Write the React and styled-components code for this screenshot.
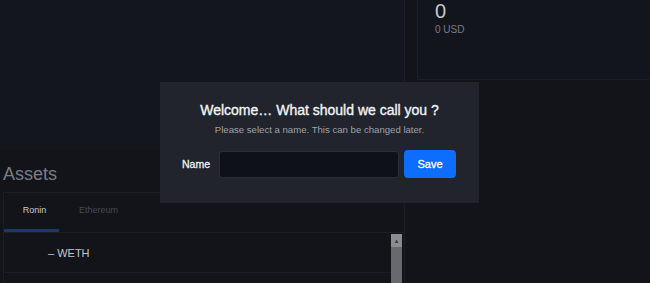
import React from "react";
import styled, { createGlobalStyle } from "styled-components";

const GlobalStyle = createGlobalStyle`
  html, body {
    margin: 0;
    padding: 0;
    background: #12141a;
    font-family: "Liberation Sans", Arial, sans-serif;
    overflow: hidden;
  }
`;

const Page = styled.div`
  position: relative;
  width: 650px;
  height: 283px;
  display: grid;
  grid-template-columns: 405px 1fr;
  column-gap: 12px;
  background: #12141a;
  overflow: hidden;
`;

const LeftCol = styled.div`
  display: flex;
  flex-direction: column;
`;

const TopCard = styled.div`
  height: 150px;
  background: #14161d;
  border-right: 1px solid #1c1f27;
`;

const Heading = styled.h2`
  margin: 14px 0 0 3px;
  font-size: 18px;
  font-weight: 400;
  color: #7a7d86;
  height: 28px;
`;

const TabsCard = styled.div`
  margin-left: 3px;
  border: 1px solid #1b1e26;
  border-bottom: none;
  background: #12141a;
  flex: 1;
  display: flex;
  flex-direction: column;
`;

const TabBar = styled.div`
  display: flex;
  height: 39px;
  border-bottom: 1px solid #1c1f28;
`;

const Tab = styled.div`
  width: ${p => (p.$active ? "55px" : "auto")};
  margin-left: ${p => (p.$active ? "0" : "20px")};
  padding-left: ${p => (p.$active ? "6px" : "0")};
  display: flex;
  align-items: center;
  justify-content: center;
  font-size: 9px;
  color: ${p => (p.$active ? "#c7c9ce" : "#474a53")};
  border-bottom: 3px solid ${p => (p.$active ? "#1c3a68" : "transparent")};
  box-sizing: border-box;
  padding-bottom: 2px;
`;

const ListArea = styled.div`
  flex: 1;
  display: flex;
`;

const Rows = styled.div`
  flex: 1;
`;

const Row = styled.div`
  height: 39px;
  border-bottom: 1px solid #1b1e26;
  display: flex;
  align-items: center;
  padding-left: 44px;
  font-size: 11px;
  color: #c3c5ca;
`;

const Scrollbar = styled.div`
  width: 11px;
  margin: 1px 2px 0 0;
  background: #67696e;
  display: flex;
  flex-direction: column;
`;

const ScrollArrow = styled.div`
  height: 13px;
  background: #8a8c90;
  display: flex;
  justify-content: center;
  align-items: center;
  font-size: 6px;
  color: #3a3c40;
`;

const StatsCard = styled.div`
  height: 80px;
  box-sizing: border-box;
  background: #13151c;
  border-left: 1px solid #1b1e26;
  border-bottom: 1px solid #1b1e26;
  padding: 0 0 0 17px;
`;

const Amount = styled.div`
  font-size: 20px;
  font-weight: 300;
  color: #c6c8cd;
  line-height: 22px;
`;

const Usd = styled.div`
  font-size: 10px;
  color: #7a7d86;
  margin-top: 2px;
`;

const Modal = styled.div`
  position: absolute;
  left: 160px;
  top: 82px;
  width: 319px;
  height: 121px;
  background: #21242d;
  box-sizing: border-box;
  padding-top: 19px;
  display: flex;
  flex-direction: column;
  align-items: center;
`;

const Title = styled.div`
  font-size: 14px;
  font-weight: 400;
  -webkit-text-stroke: 0.35px #f2f3f5;
  color: #f2f3f5;
  line-height: 18px;
`;

const Subtitle = styled.div`
  margin-top: 5px;
  font-size: 9.6px;
  color: #9fa2aa;
`;

const FormRow = styled.div`
  margin-top: 15px;
  display: flex;
  align-items: center;
  width: 100%;
  box-sizing: border-box;
  padding-left: 22px;
`;

const Label = styled.label`
  font-size: 10.5px;
  font-weight: 400;
  -webkit-text-stroke: 0.3px #f0f1f3;
  color: #f0f1f3;
  width: 37px;
`;

const Input = styled.input`
  width: 180px;
  height: 27px;
  box-sizing: border-box;
  background: #0f1118;
  border: 1px solid #2b2e37;
  border-radius: 3px;
  outline: none;
  color: #fff;
`;

const SaveButton = styled.button`
  margin-left: 5px;
  width: 52px;
  height: 28px;
  border: none;
  border-radius: 4px;
  background: #0d6efd;
  color: #fff;
  font-family: "Liberation Sans", Arial, sans-serif;
  font-size: 11px;
  font-weight: 400;
  -webkit-text-stroke: 0.3px #fff;
`;

export default function App() {
  return (
    <>
      <GlobalStyle />
      <Page>
        <LeftCol>
          <TopCard />
          <Heading>Assets</Heading>
          <TabsCard>
            <TabBar>
              <Tab $active>Ronin</Tab>
              <Tab>Ethereum</Tab>
            </TabBar>
            <ListArea>
              <Rows>
                <Row>– WETH</Row>
              </Rows>
              <Scrollbar>
                <ScrollArrow>▲</ScrollArrow>
              </Scrollbar>
            </ListArea>
          </TabsCard>
        </LeftCol>
        <div>
          <StatsCard>
            <Amount>0</Amount>
            <Usd>0 USD</Usd>
          </StatsCard>
        </div>
        <Modal>
          <Title>Welcome… What should we call you ?</Title>
          <Subtitle>Please select a name. This can be changed later.</Subtitle>
          <FormRow>
            <Label>Name</Label>
            <Input />
            <SaveButton>Save</SaveButton>
          </FormRow>
        </Modal>
      </Page>
    </>
  );
}
